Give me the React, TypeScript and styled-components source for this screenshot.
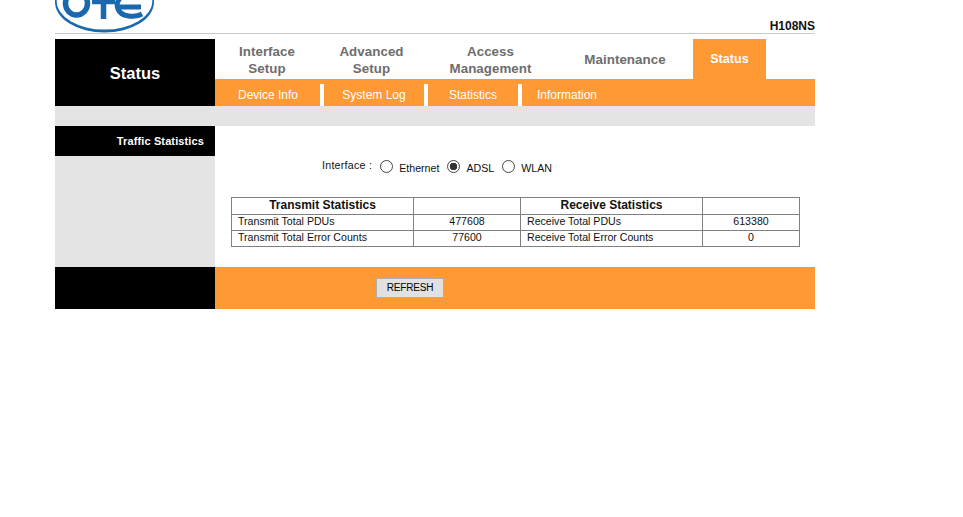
import React, { Fragment } from "react";
import styled, { createGlobalStyle } from "styled-components";

const ORANGE = "#ff9933";
const GREY = "#e4e4e4";

const tabs = [
  { label: ["Interface", "Setup"], width: 104 },
  { label: ["Advanced", "Setup"], width: 105 },
  { label: ["Access", "Management"], width: 133 },
  { label: ["Maintenance"], width: 136 },
  { label: ["Status"], width: 73, active: true },
];

const subTabs = [
  { label: "Device Info", width: 105 },
  { label: "System Log", width: 100 },
  { label: "Statistics", width: 90 },
  { label: "Information", width: 90, last: true },
];

function Logo() {
  return (
    <LogoSvg viewBox="0 0 100 33" width={100} height={33}>
      <ellipse cx="49.5" cy="2" rx="49.5" ry="30.5" fill="#1a68ad" />
      <ellipse cx="49.5" cy="1" rx="47.8" ry="28.6" fill="#fff" />
      <ellipse cx="21.5" cy="3.5" rx="11" ry="11.5" fill="none" stroke="#1a68ad" strokeWidth="5.5" />
      <path d="M37 1.5H60M48.5 0V19" fill="none" stroke="#1a68ad" strokeWidth="5.5" />
      <path d="M87 14C80 18 66 17 63 9C61 4 63 0 66 -3M64 7H86" fill="none" stroke="#1a68ad" strokeWidth="5" />
    </LogoSvg>
  );
}

function Radio({ checked }: { checked?: boolean }) {
  return <RadioMark $checked={checked} />;
}

export default function App() {
  return (
    <Page>
      <GlobalStyle />
      <Header>
        <Logo />
        <Model>H108NS</Model>
      </Header>
      <TopRow>
        <SideTitle>Status</SideTitle>
        <Nav>
          <Tabs>
            {tabs.map((t) => (
              <Tab
                key={t.label.join(" ")}
                $width={t.width}
                $active={t.active}
                $double={t.label.length > 1}
              >
                {t.label.map((line) => (
                  <span key={line}>{line}</span>
                ))}
              </Tab>
            ))}
          </Tabs>
          <SubTabs>
            {subTabs.map((s) => (
              <Fragment key={s.label}>
                <SubTab $width={s.width}>{s.label}</SubTab>
                {!s.last && <SubDivider />}
              </Fragment>
            ))}
          </SubTabs>
        </Nav>
      </TopRow>
      <Band />
      <Main>
        <Side>
          <SideHeading>Traffic Statistics</SideHeading>
        </Side>
        <Content>
          <InterfaceRow>
            <InterfaceLabel>Interface :</InterfaceLabel>
            <Radio />
            <RadioLabel>Ethernet</RadioLabel>
            <Radio checked />
            <RadioLabel>ADSL</RadioLabel>
            <Radio />
            <RadioLabel>WLAN</RadioLabel>
          </InterfaceRow>
          <StatsTable>
            <colgroup>
              <col width={182} />
              <col width={107} />
              <col width={182} />
              <col width={97} />
            </colgroup>
            <tbody>
              <HeadRow>
                <th>Transmit Statistics</th>
                <th></th>
                <th>Receive Statistics</th>
                <th></th>
              </HeadRow>
              <BodyRow>
                <NameCell>Transmit Total PDUs</NameCell>
                <ValueCell>477608</ValueCell>
                <NameCell>Receive Total PDUs</NameCell>
                <ValueCell>613380</ValueCell>
              </BodyRow>
              <BodyRow>
                <NameCell>Transmit Total Error Counts</NameCell>
                <ValueCell>77600</ValueCell>
                <NameCell>Receive Total Error Counts</NameCell>
                <ValueCell>0</ValueCell>
              </BodyRow>
            </tbody>
          </StatsTable>
        </Content>
      </Main>
      <Footer>
        <FooterSide />
        <FooterBar>
          <RefreshButton type="button">REFRESH</RefreshButton>
        </FooterBar>
      </Footer>
    </Page>
  );
}

const GlobalStyle = createGlobalStyle`
  html, body {
    margin: 0;
    padding: 0;
    background: #fff;
    font-family: "Liberation Sans", Arial, sans-serif;
  }
`;

const Page = styled.div`
  width: 760px;
  margin-left: 55px;
`;

const Header = styled.header`
  height: 33px;
  display: flex;
  justify-content: space-between;
  align-items: flex-end;
  border-bottom: 1px solid #c8c8c8;
  margin-bottom: 5px;
`;

const LogoSvg = styled.svg`
  display: block;
`;

const Model = styled.div`
  font-size: 12px;
  font-weight: bold;
  line-height: 14px;
  color: #111;
`;

const TopRow = styled.div`
  display: flex;
  height: 67px;
`;

const SideTitle = styled.div`
  width: 160px;
  padding-top: 1px;
  box-sizing: border-box;
  background: #000;
  color: #fff;
  font-size: 16.5px;
  font-weight: bold;
  display: flex;
  align-items: center;
  justify-content: center;
`;

const Nav = styled.nav`
  flex: 1;
  display: flex;
  flex-direction: column;
`;

const Tabs = styled.div`
  height: 40px;
  display: flex;
`;

const Tab = styled.div<{ $width: number; $active?: boolean; $double?: boolean }>`
  width: ${(p) => p.$width}px;
  box-sizing: border-box;
  padding-top: ${(p) => (p.$double ? "2px" : "0")};
  display: flex;
  flex-direction: column;
  align-items: center;
  justify-content: center;
  font-size: ${(p) => (p.$active ? "12.5px" : "13.33px")};
  letter-spacing: 0.05px;
  line-height: 17px;
  font-weight: bold;
  color: ${(p) => (p.$active ? "#fff" : "#6d6d6d")};
  background: ${(p) => (p.$active ? ORANGE : "transparent")};
`;

const SubTabs = styled.div`
  height: 27px;
  display: flex;
  background: ${ORANGE};
`;

const SubTab = styled.div<{ $width: number }>`
  width: ${(p) => p.$width}px;
  box-sizing: border-box;
  padding-top: 4px;
  display: flex;
  align-items: center;
  justify-content: center;
  font-size: 12px;
  color: #fff;

  &:first-child {
    padding-left: 1px;
  }
`;

const SubDivider = styled.span`
  width: 4px;
  margin-top: 5px;
  background: #fff;
`;

const Band = styled.div`
  height: 20px;
  background: ${GREY};
`;

const Main = styled.div`
  display: flex;
  height: 141px;
`;

const Side = styled.aside`
  width: 160px;
  background: ${GREY};
`;

const SideHeading = styled.div`
  height: 30px;
  background: #000;
  color: #fff;
  font-size: 11px;
  letter-spacing: 0.12px;
  font-weight: bold;
  display: flex;
  align-items: center;
  justify-content: flex-end;
  padding-right: 11px;
`;

const Content = styled.div`
  flex: 1;
  padding: 32px 0 0 16px;
`;

const InterfaceRow = styled.div`
  display: flex;
  align-items: center;
  height: 16px;
  padding-left: 91px;
  margin-bottom: 23px;
  font-size: 10.67px;
  color: #111;
`;

const InterfaceLabel = styled.span`
  letter-spacing: 0.25px;
  margin-right: 8px;
  transform: translateY(-1px);
`;

const RadioMark = styled.span<{ $checked?: boolean }>`
  box-sizing: border-box;
  width: 13px;
  height: 13px;
  border-radius: 50%;
  border: 1px solid #444;
  background: ${(p) =>
    p.$checked ? "radial-gradient(circle, #333 0 3.5px, #fff 4px)" : "#fff"};
`;

const RadioLabel = styled.span`
  margin: 0 8px 0 6px;
  transform: translateY(2px);
`;

const StatsTable = styled.table`
  width: 568px;
  table-layout: fixed;
  border-collapse: collapse;
  border: 1px solid #808080;
  color: #111;

  td, th {
    border: 1px solid #808080;
    padding: 0 0 3px;
    line-height: 12px;
  }
`;

const HeadRow = styled.tr`
  height: 17px;
  font-size: 12px;

  th {
    font-weight: bold;
    text-align: center;
    color: #111;
  }
`;

const BodyRow = styled.tr`
  height: 16px;
  font-size: 10.6px;
`;

const NameCell = styled.td`
  padding-left: 6px !important;
`;

const ValueCell = styled.td`
  text-align: center;
`;

const Footer = styled.div`
  display: flex;
  height: 42px;
`;

const FooterSide = styled.div`
  width: 160px;
  background: #000;
`;

const FooterBar = styled.div`
  flex: 1;
  background: ${ORANGE};
  display: flex;
  align-items: center;
  padding-left: 161px;
`;

const RefreshButton = styled.button`
  box-sizing: border-box;
  width: 68px;
  height: 20px;
  padding: 0 0 2px;
  background: #e1e1e1;
  border: 1px solid #adadad;
  font-family: "Liberation Sans", Arial, sans-serif;
  font-size: 10px;
  letter-spacing: -0.2px;
  color: #000;
`;
